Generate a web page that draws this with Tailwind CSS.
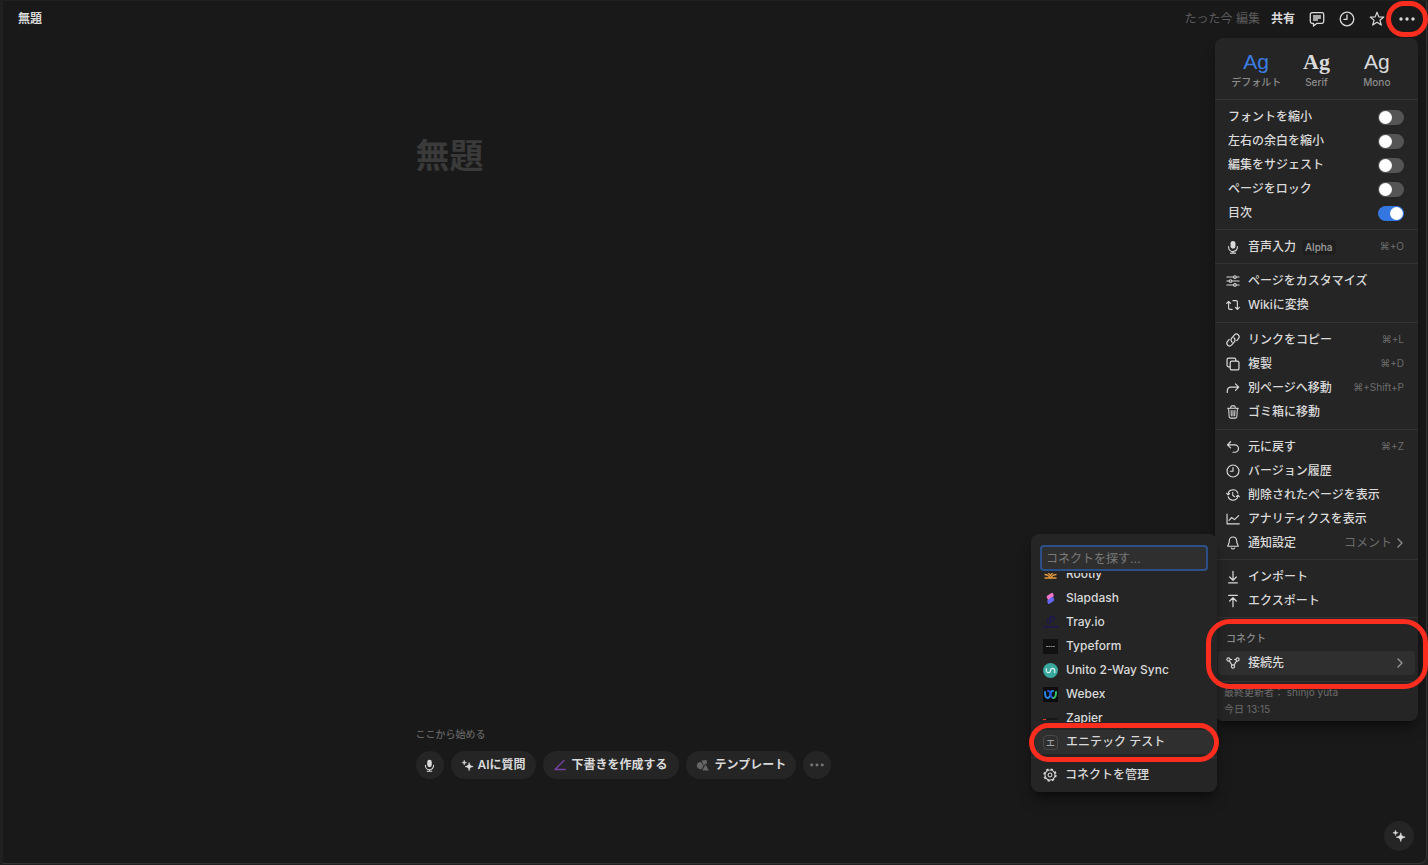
<!DOCTYPE html>
<html lang="ja">
<head>
    <meta charset="UTF-8">
    <meta name="viewport" content="width=device-width, initial-scale=1.0">
    <title>無題</title>
    <script src="https://cdn.jsdelivr.net/npm/@tailwindcss/browser@4"></script>
</head>
<body class="bg-[#202020] font-['Inter','Noto_Sans_CJK_JP',sans-serif] text-xs font-medium text-[#dadada]">
    <!-- Shared icons -->
    <svg class="hidden" aria-hidden="true">
        <symbol id="icon-mic" viewBox="0 0 16 16">
            <rect x="5.2" y="1" width="5.6" height="9" rx="2.8" fill="currentColor"/>
            <path d="M3 7.6v.6a5 5 0 0 0 10 0v-.6M8 13.2V15M5.2 15h5.6" fill="none" stroke="currentColor" stroke-width="1.3" stroke-linecap="round"/>
        </symbol>
        <symbol id="icon-clock" viewBox="0 0 16 16">
            <path d="M8 4v4.3H4.9" fill="none" stroke="currentColor" stroke-width="1.3" stroke-linecap="round" stroke-linejoin="round"/>
            <circle cx="8" cy="8" r="6.8" fill="none" stroke="currentColor" stroke-width="1.3"/>
        </symbol>
        <symbol id="icon-sparkle" viewBox="0 0 16 16">
            <path d="M10 4.4c.5 3.3 1.6 4.4 5 4.9-3.4.5-4.5 1.6-5 5-.5-3.4-1.6-4.5-5-5 3.4-.5 4.5-1.6 5-4.9Z" fill="currentColor" stroke="currentColor" stroke-width=".8" stroke-linejoin="round"/>
            <path d="M4 1.4c.3 2 1 2.7 3 3-2 .3-2.7 1-3 3-.3-2-1-2.7-3-3 2-.3 2.7-1 3-3Z" fill="currentColor" stroke="currentColor" stroke-width=".6" stroke-linejoin="round"/>
        </symbol>
        <symbol id="icon-dots" viewBox="0 0 16 16">
            <circle cx="2" cy="8" r="1.7" fill="currentColor"/>
            <circle cx="8" cy="8" r="1.7" fill="currentColor"/>
            <circle cx="14" cy="8" r="1.7" fill="currentColor"/>
        </symbol>
        <symbol id="icon-chevron" viewBox="0 0 8 12">
            <path d="m2 2 4 4-4 4" fill="none" stroke="currentColor" stroke-width="1.3" stroke-linecap="round" stroke-linejoin="round"/>
        </symbol>
    </svg>

    <div class="relative flex min-h-screen flex-col pt-px pr-px pb-px pl-[3px]">
        <div class="flex flex-1 flex-col rounded-br-lg border-r border-b border-[#333333] bg-[#191919]">
            <header class="flex h-9 items-center justify-between pr-1 pl-[15px]">
                <h2 class="font-semibold">無題</h2>
                <div class="flex items-center">
                    <span class="mr-[11px] font-normal text-[#5c5c5c]">たった今 編集</span>
                    <button class="mr-[7px] font-semibold">共有</button>
                    <button class="flex h-7 w-[30px] items-center justify-center" aria-label="コメント">
                        <svg class="h-4 w-4" viewBox="0 0 16 16" fill="none" stroke="currentColor" stroke-width="1.3" stroke-linecap="round" stroke-linejoin="round">
                            <path d="M3 1.7h10A1.7 1.7 0 0 1 14.7 3.4v7.2A1.7 1.7 0 0 1 13 12.300H8L4.500 15v-2.700H3a1.7 1.7 0 0 1-1.7-1.7V3.400A1.7 1.7 0 0 1 3 1.7Z"/>
                            <path d="M4.5 5h7M4.5 7h7M4.5 9h4"/>
                        </svg>
                    </button>
                    <button class="flex h-7 w-[30px] items-center justify-center" aria-label="履歴">
                        <svg class="h-4 w-4"><use href="#icon-clock"/></svg>
                    </button>
                    <button class="flex h-7 w-[30px] items-center justify-center" aria-label="お気に入り">
                        <svg class="h-4 w-4" viewBox="0 0 16 16" fill="none" stroke="currentColor" stroke-width="1.2" stroke-linejoin="round">
                            <path d="m8 1.2 1.8 4.7 5 .2-3.9 3.1 1.4 4.9L8 11.3l-4.300 2.800 1.4-4.900-3.900-3.100 5-.2Z"/>
                        </svg>
                    </button>
                    <button class="relative flex h-7 w-[30px] items-center justify-center" aria-label="メニュー">
                        <svg class="h-4 w-4"><use href="#icon-dots"/></svg>
                        <span class="absolute -inset-x-[6px] -inset-y-1 z-30 rounded-full border-[5px] border-[#fb2d1f]"></span>
                    </button>
                </div>
            </header>

            <main class="mx-auto flex w-full max-w-[598px] flex-1 flex-col justify-between pt-[95px] pb-[84px]">
                <h1 class="text-[34px] leading-[48px] font-bold text-[#3a3a3a]">無題</h1>
                <div>
                    <p class="mb-[9px] text-[10px] leading-4 text-[#636363]">ここから始める</p>
                    <div class="flex gap-[7px]">
                        <button class="flex h-7 w-7 items-center justify-center rounded-full bg-[#252525]" aria-label="音声入力">
                            <svg class="h-[13px] w-[13px]"><use href="#icon-mic"/></svg>
                        </button>
                        <button class="flex h-7 items-center gap-1 rounded-full bg-[#252525] px-[10px] font-semibold">
                            <svg class="h-[13px] w-[13px]"><use href="#icon-sparkle"/></svg>
                            AIに質問
                        </button>
                        <button class="flex h-7 items-center gap-[6px] rounded-full bg-[#252525] px-[11px] font-semibold">
                            <svg class="h-3 w-3 text-[#7b41a5]" viewBox="0 0 12 12" fill="none" stroke="currentColor" stroke-width="1.3" stroke-linecap="round" stroke-linejoin="round">
                                <path d="M10 1.5 1 10.5h10.3"/>
                            </svg>
                            下書きを作成する
                        </button>
                        <button class="flex h-7 items-center gap-[6px] rounded-full bg-[#252525] px-[10px] font-semibold">
                            <svg class="h-[13px] w-[13px] text-[#666666]" viewBox="0 0 14 14" fill="currentColor">
                                <path d="M5.5 3.2A3.9 3.9 0 1 0 6.5 10.5L8 7.5Z"/>
                                <path d="M6 1.5 11.5 1l.4 4.2-1.4-.4-2.2 2.4Z"/>
                                <path d="m10.3 6 3.5 6.5H6.7Z"/>
                            </svg>
                            テンプレート
                        </button>
                        <button class="flex h-7 w-7 items-center justify-center rounded-full bg-[#252525] text-[#777777]" aria-label="その他">
                            <svg class="h-[14px] w-[14px]"><use href="#icon-dots"/></svg>
                        </button>
                    </div>
                </div>
            </main>
        </div>

        <button class="absolute right-[14px] bottom-[14px] flex h-[30px] w-[30px] items-center justify-center rounded-full bg-[#252525]" aria-label="AI">
            <svg class="h-[14px] w-[14px]"><use href="#icon-sparkle"/></svg>
        </button>

        <!-- Page menu -->
        <div class="absolute top-[38px] right-[10px] z-10 w-[203px] divide-y divide-[#333333] rounded-lg bg-[#252525] shadow-lg shadow-black/40">
            <div class="grid h-[62px] grid-cols-3 items-center px-[11px] pt-[2px] text-center">
                <button class="flex flex-col items-center">
                    <span class="font-['Liberation_Sans',sans-serif] text-[21px] leading-6 text-[#3b7de0]">Ag</span>
                    <span class="text-[10px] leading-4 text-[#8c8c8c]">デフォルト</span>
                </button>
                <button class="flex flex-col items-center">
                    <span class="font-['Liberation_Serif',serif] text-[22px] leading-6 font-bold">Ag</span>
                    <span class="text-[10px] leading-4 text-[#8c8c8c]">Serif</span>
                </button>
                <button class="flex flex-col items-center">
                    <span class="font-['Liberation_Sans',sans-serif] text-[21px] leading-6">Ag</span>
                    <span class="text-[10px] leading-4 text-[#8c8c8c]">Mono</span>
                </button>
            </div>

            <div class="pt-[5px] pr-[14px] pb-1 pl-[13px]">
                <label class="flex h-6 items-center justify-between">フォントを縮小
                    <input type="checkbox" role="switch" class="flex h-[15px] w-[26px] appearance-none items-center rounded-full bg-[#555555] px-px before:h-[13px] before:w-[13px] before:rounded-full before:bg-white checked:justify-end checked:bg-[#3577e0]">
                </label>
                <label class="flex h-6 items-center justify-between">左右の余白を縮小
                    <input type="checkbox" role="switch" class="flex h-[15px] w-[26px] appearance-none items-center rounded-full bg-[#555555] px-px before:h-[13px] before:w-[13px] before:rounded-full before:bg-white checked:justify-end checked:bg-[#3577e0]">
                </label>
                <label class="flex h-6 items-center justify-between">編集をサジェスト
                    <input type="checkbox" role="switch" class="flex h-[15px] w-[26px] appearance-none items-center rounded-full bg-[#555555] px-px before:h-[13px] before:w-[13px] before:rounded-full before:bg-white checked:justify-end checked:bg-[#3577e0]">
                </label>
                <label class="flex h-6 items-center justify-between">ページをロック
                    <input type="checkbox" role="switch" class="flex h-[15px] w-[26px] appearance-none items-center rounded-full bg-[#555555] px-px before:h-[13px] before:w-[13px] before:rounded-full before:bg-white checked:justify-end checked:bg-[#3577e0]">
                </label>
                <label class="flex h-6 items-center justify-between">目次
                    <input type="checkbox" role="switch" checked class="flex h-[15px] w-[26px] appearance-none items-center rounded-full bg-[#555555] px-px before:h-[13px] before:w-[13px] before:rounded-full before:bg-white checked:justify-end checked:bg-[#3577e0]">
                </label>
            </div>

            <div class="pt-[5px] pr-[14px] pb-1 pl-[11px]">
                <button class="flex h-6 w-full items-center">
                    <svg class="mr-2 h-[14px] w-[14px]"><use href="#icon-mic"/></svg>
                    音声入力
                    <span class="ml-[6px] rounded-sm bg-[#1f1f1f] px-[3px] text-[10px] leading-[15px] text-[#a0a0a0]">Alpha</span>
                    <span class="ml-auto text-[10px] font-normal text-[#6c6c6c]">⌘+O</span>
                </button>
            </div>

            <div class="py-[5px] pr-[14px] pl-[11px]">
                <button class="flex h-6 w-full items-center">
                    <svg class="mr-2 h-[14px] w-[14px]" viewBox="0 0 16 16" fill="none" stroke="currentColor" stroke-width="1.2" stroke-linecap="round">
                        <path d="M1 3.5h7.5M12 3.5h3M1 8h2.5M7 8h8M1 12.5h7.5M12 12.5h3"/>
                        <circle cx="10.2" cy="3.5" r="1.5"/>
                        <circle cx="5.2" cy="8" r="1.5"/>
                        <circle cx="10.2" cy="12.5" r="1.5"/>
                    </svg>
                    ページをカスタマイズ
                </button>
                <button class="flex h-6 w-full items-center">
                    <svg class="mr-2 h-[14px] w-[14px]" viewBox="0 0 16 16" fill="none" stroke="currentColor" stroke-width="1.3" stroke-linecap="round" stroke-linejoin="round">
                        <path d="M.8 6.2 3 4l2.2 2.2M3 4v7.5A1.5 1.5 0 0 0 4.5 13H7M10.8 10.8 13 13l2.2-2.2M13 13V4.5A1.5 1.5 0 0 0 11.5 3H8"/>
                    </svg>
                    Wikiに変換
                </button>
            </div>

            <div class="py-[5px] pr-[14px] pl-[11px]">
                <button class="flex h-6 w-full items-center">
                    <svg class="mr-2 h-[14px] w-[14px]" viewBox="0 0 16 16" fill="none" stroke="currentColor" stroke-width="1.4" stroke-linecap="round">
                        <path d="M7 10.5a3.2 3.2 0 0 1-.5-4.6l3.2-3.8a3.1 3.1 0 0 1 4.7 4L12.3 8.7"/>
                        <path d="M9 5.500a3.2 3.2 0 0 1 .5 4.6l-3.2 3.8a3.1 3.1 0 0 1-4.7-4L3.7 7.3"/>
                    </svg>
                    リンクをコピー
                    <span class="ml-auto text-[10px] font-normal text-[#6c6c6c]">⌘+L</span>
                </button>
                <button class="flex h-6 w-full items-center">
                    <svg class="mr-2 h-[14px] w-[14px]" viewBox="0 0 16 16" fill="none" stroke="currentColor" stroke-width="1.4" stroke-linejoin="round">
                        <rect x="4.8" y="4.8" width="10" height="10" rx="1.8"/>
                        <path d="M4.8 11.2H3a1.8 1.8 0 0 1-1.8-1.8V3A1.8 1.8 0 0 1 3 1.2h6.4A1.8 1.8 0 0 1 11.2 3v1.8"/>
                    </svg>
                    複製
                    <span class="ml-auto text-[10px] font-normal text-[#6c6c6c]">⌘+D</span>
                </button>
                <button class="flex h-6 w-full items-center">
                    <svg class="mr-2 h-[14px] w-[14px]" viewBox="0 0 16 16" fill="none" stroke="currentColor" stroke-width="1.4" stroke-linecap="round" stroke-linejoin="round">
                        <path d="M1.5 13v-2a4 4 0 0 1 4-4h9M10.8 3.3 14.5 7l-3.7 3.7"/>
                    </svg>
                    別ページへ移動
                    <span class="ml-auto text-[10px] font-normal text-[#6c6c6c]">⌘+Shift+P</span>
                </button>
                <button class="flex h-6 w-full items-center">
                    <svg class="mr-2 h-[14px] w-[14px]" viewBox="0 0 16 16" fill="none" stroke="currentColor" stroke-width="1.2" stroke-linecap="round" stroke-linejoin="round">
                        <path d="M1.8 3.7h12.4M5.5 3.5V2.2A1.2 1.2 0 0 1 6.7 1h2.6a1.2 1.2 0 0 1 1.2 1.2v1.3M3 4l.6 9.5A1.6 1.6 0 0 0 5.2 15h5.6a1.6 1.6 0 0 0 1.6-1.5L13 4M5.8 6.3l.3 6M8 6.3v6M10.2 6.3l-.3 6"/>
                    </svg>
                    ゴミ箱に移動
                </button>
            </div>

            <div class="pt-[5px] pr-[14px] pb-1 pl-[11px]">
                <button class="flex h-6 w-full items-center">
                    <svg class="mr-2 h-[14px] w-[14px]" viewBox="0 0 16 16" fill="none" stroke="currentColor" stroke-width="1.4" stroke-linecap="round" stroke-linejoin="round">
                        <path d="M5.2 2 1.7 5.5 5.2 9M1.7 5.5H10a4.2 4.2 0 0 1 0 8.5H8"/>
                    </svg>
                    元に戻す
                    <span class="ml-auto text-[10px] font-normal text-[#6c6c6c]">⌘+Z</span>
                </button>
                <button class="flex h-6 w-full items-center">
                    <svg class="mr-2 h-[14px] w-[14px]"><use href="#icon-clock"/></svg>
                    バージョン履歴
                </button>
                <button class="flex h-6 w-full items-center">
                    <svg class="mr-2 h-[14px] w-[14px]" viewBox="0 0 16 16" fill="none" stroke="currentColor" stroke-width="1.2" stroke-linecap="round" stroke-linejoin="round">
                        <path d="M2.3 7a5.8 5.8 0 0 1 11.2-1M13.7 9a5.8 5.8 0 0 1-11.2 1M.7 6l1.6 1.9L4.2 6.3M15.3 10l-1.6-1.9-1.9 1.6M7.7 5v3.3l2 1.7"/>
                    </svg>
                    削除されたページを表示
                </button>
                <button class="flex h-6 w-full items-center">
                    <svg class="mr-2 h-[14px] w-[14px]" viewBox="0 0 16 16" fill="none" stroke="currentColor" stroke-width="1.3" stroke-linecap="round" stroke-linejoin="round">
                        <path d="M1.2 2.500v11h14M3.500 9.500l3-3.200 3.200 2.400 4.800-4.500"/>
                    </svg>
                    アナリティクスを表示
                </button>
                <button class="flex h-6 w-full items-center">
                    <svg class="mr-2 h-[14px] w-[14px]" viewBox="0 0 16 16" fill="none" stroke="currentColor" stroke-width="1.3" stroke-linecap="round" stroke-linejoin="round">
                        <path d="M8 1.2c-2.700 0-4.200 2-4.200 4.400 0 3.300-1.800 4.400-1.800 6.100h12c0-1.700-1.800-2.800-1.800-6.100 0-2.400-1.500-4.400-4.200-4.400ZM6.200 13.800c.3.7 1 1.100 1.800 1.100s1.500-.4 1.800-1.100"/>
                    </svg>
                    通知設定
                    <span class="ml-auto font-normal text-[#6c6c6c]">コメント</span>
                    <svg class="ml-1 h-3 w-2 text-[#8c8c8c]"><use href="#icon-chevron"/></svg>
                </button>
            </div>

            <div class="pt-[5px] pr-[14px] pb-1 pl-[11px]">
                <button class="flex h-6 w-full items-center">
                    <svg class="mr-2 h-[14px] w-[14px]" viewBox="0 0 16 16" fill="none" stroke="currentColor" stroke-width="1.4" stroke-linecap="round" stroke-linejoin="round">
                        <path d="M8 1.5v10M4.2 8 8 11.7 11.8 8M3 14.7h10"/>
                    </svg>
                    インポート
                </button>
                <button class="flex h-6 w-full items-center">
                    <svg class="mr-2 h-[14px] w-[14px]" viewBox="0 0 16 16" fill="none" stroke="currentColor" stroke-width="1.4" stroke-linecap="round" stroke-linejoin="round">
                        <path d="M8 14.5v-10M4.2 8 8 4.3 11.8 8M3 1.5h10"/>
                    </svg>
                    エクスポート
                </button>
            </div>

            <div class="relative px-[3px] pt-3 pb-[6px]">
                <h3 class="mb-[5px] pl-2 text-[10px] leading-4 text-[#8c8c8c]">コネクト</h3>
                <div class="relative">
                    <button class="flex h-6 w-full items-center rounded bg-[#2f2f2f] pr-[11px] pl-2">
                        <svg class="mr-2 h-[14px] w-[14px]" viewBox="0 0 16 16" fill="none" stroke="currentColor" stroke-width="1.3">
                            <circle cx="2.8" cy="4" r="1.8"/>
                            <circle cx="13.2" cy="4" r="1.8"/>
                            <circle cx="8" cy="12" r="1.8"/>
                            <path d="M4.6 4h2.400M9.400 4h2M3.900 5.600 6.900 10.500M12.100 5.600 9.100 10.500"/>
                        </svg>
                        接続先
                        <svg class="ml-auto h-3 w-2 text-[#9a9a9a]"><use href="#icon-chevron"/></svg>
                    </button>

                    <!-- Connection list, opens to the left of its row -->
                    <div class="absolute right-full -bottom-[117px] z-20 mr-px w-[186px] rounded-lg bg-[#252525] shadow-lg shadow-black/40">
                        <div class="px-[9px] pt-[11px] pb-[2px]">
                            <input type="text" aria-label="コネクトを探す" placeholder="コネクトを探す..." class="block h-[26px] w-full rounded border-2 border-[#2b4f86] bg-[#2f2f2f] px-1 font-normal outline-none placeholder:text-[#7a7a7a]">
                        </div>
                        <div class="flex h-[184px] flex-col justify-end overflow-hidden px-1 pb-[3px]">
                            <button class="flex h-6 w-full shrink-0 items-center gap-2 px-2">
                                <svg class="h-[15px] w-[15px]" viewBox="0 0 15 15" fill="none" stroke="#e39a3c" stroke-width="1.3">
                                    <path d="M1.5 7.5c2.5 0 4.3 1 6 3.5 1.7-2.5 3.5-3.5 6-3.500M1.5 11h12M4 4.500l3.500 4 3.500-4"/>
                                </svg>
                                Rootly
                            </button>
                            <button class="flex h-6 w-full shrink-0 items-center gap-2 px-2">
                                <svg class="h-[15px] w-[15px]" viewBox="0 0 15 15">
                                    <path d="M4.2 4.8 8 2.2a1.5 1.5 0 0 1 2.3.8l.5 2.3-5.6 4-1.3-2.5a1.6 1.6 0 0 1 .3-2Z" fill="#f173c7"/>
                                    <path d="m10.7 10-3.8 2.6a1.5 1.5 0 0 1-2.3-.8l-.3-2.3 5.5-4 1.2 2.5a1.6 1.6 0 0 1-.3 2Z" fill="#6466f5"/>
                                </svg>
                                Slapdash
                            </button>
                            <button class="flex h-6 w-full shrink-0 items-center gap-2 px-2">
                                <svg class="h-[15px] w-[15px]" viewBox="0 0 15 15" fill="none" stroke="#1c1653" stroke-width="1.2">
                                    <circle cx="6" cy="6" r="2"/>
                                    <circle cx="9.2" cy="3.2" r="2"/>
                                    <path d="M0 12h15" stroke-width="2" stroke-dasharray="1.5 .7"/>
                                </svg>
                                Tray.io
                            </button>
                            <button class="flex h-6 w-full shrink-0 items-center gap-2 px-2">
                                <svg class="h-[15px] w-[15px]" viewBox="0 0 15 15">
                                    <path d="M0 0h15v15H0z" fill="#111111"/>
                                    <path d="M3 7.5h9" stroke="#888888" stroke-dasharray="2 .3"/>
                                </svg>
                                Typeform
                            </button>
                            <button class="flex h-6 w-full shrink-0 items-center gap-2 px-2">
                                <svg class="h-[15px] w-[15px]" viewBox="0 0 15 15">
                                    <circle cx="7.5" cy="7.5" r="7.5" fill="#3aa79f"/>
                                    <path d="M3.3 5.5v2a2.1 2.1 0 0 0 4.2 0 2.1 2.1 0 0 1 4.2 0v2" fill="none" stroke="#d9f2ef" stroke-width="1.2" stroke-linecap="round"/>
                                </svg>
                                Unito 2-Way Sync
                            </button>
                            <button class="flex h-6 w-full shrink-0 items-center gap-2 px-2">
                                <svg class="h-[15px] w-[15px]" viewBox="0 0 15 15" fill="none" stroke-width="2" stroke-linecap="round">
                                    <path d="M0 0h15v15H0z" fill="#0c0c0c"/>
                                    <path d="M2 5c0 4 1 6 2.7 6S7.5 8.5 7.5 7 8.3 4 10 4" stroke="#2688e8"/>
                                    <path d="M5 4c1.7 0 2.5 1.5 2.5 3s1.2 4 2.8 4" stroke="#2553d8"/>
                                    <path d="M10.3 11C12 11 13 9 13 5" stroke="#35c46e"/>
                                </svg>
                                Webex
                            </button>
                            <button class="flex h-6 w-full shrink-0 items-center gap-2 px-2">
                                <svg class="h-[15px] w-[15px]" viewBox="0 0 15 15" fill="none">
                                    <path d="M0 8.5h3" stroke="#d8412f"/>
                                    <path d="M4 8h11" stroke="#111111" stroke-width="1.5" stroke-dasharray="2 .5"/>
                                </svg>
                                Zapier
                            </button>
                            <button class="flex h-6 w-full shrink-0 items-center gap-2 rounded bg-[#2f2f2f] px-2">
                                <span class="flex h-[15px] w-[15px] items-center justify-center rounded-sm border border-[#484848] text-[9px] leading-none text-[#a0a0a0]">エ</span>
                                エニテック テスト
                            </button>
                        </div>
                        <div class="border-t border-[#333333] px-1 py-[5px]">
                            <button class="flex h-6 w-full items-center gap-2 px-2">
                                <svg class="h-[14px] w-[14px]" viewBox="0 0 16 16" fill="none" stroke="currentColor">
                                    <circle cx="8" cy="8" r="5.7" stroke-width="1.2"/>
                                    <circle cx="8" cy="8" r="6.8" stroke-width="1.6" stroke-dasharray="2.7 2.64"/>
                                    <circle cx="8" cy="8" r="2.2" stroke-width="1.2"/>
                                </svg>
                                コネクトを管理
                            </button>
                        </div>
                        <span class="pointer-events-none absolute -inset-x-[2px] bottom-[30px] h-[39px] rounded-full border-[5px] border-[#fb2d1f]"></span>
                    </div>
                </div>
                <span class="pointer-events-none absolute top-px -right-[10px] -bottom-2 -left-[9px] z-30 rounded-3xl border-[5px] border-[#fb2d1f]"></span>
            </div>

            <div class="px-[9px] pt-[2px] pb-[3px] text-[10px] leading-[17px] font-normal text-[#6c6c6c]">
                <p>最終更新者： shinjo yuta</p>
                <p>今日 13:15</p>
            </div>
        </div>
    </div>
</body>
</html>
